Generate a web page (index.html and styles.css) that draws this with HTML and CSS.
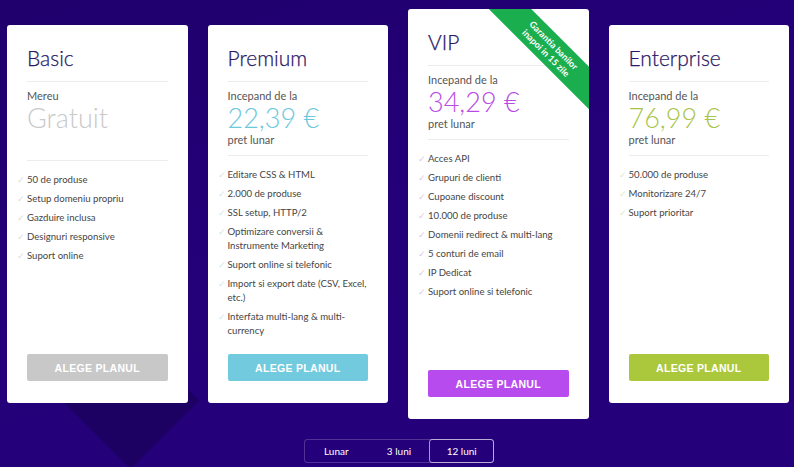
FILE: index.html
```html
<!DOCTYPE html>
<html lang="ro">
<head>
<meta charset="utf-8">
<title>Planuri</title>
<link rel="stylesheet" href="styles.css">
</head>
<body>
<div class="page">
  <div class="bg-diamond"></div>
  <div class="plans">
    <div class="card basic">
      <h2 class="title">Basic</h2>
      <div class="price-block">
        <div class="label">Mereu</div>
        <div class="price">Gratuit</div>
      </div>
      <ul class="features">
        <li>50 de produse</li>
        <li>Setup domeniu propriu</li>
        <li>Gazduire inclusa</li>
        <li>Designuri responsive</li>
        <li>Suport online</li>
      </ul>
      <button class="btn">ALEGE PLANUL</button>
    </div>
    <div class="card premium">
      <h2 class="title">Premium</h2>
      <div class="price-block">
        <div class="label">Incepand de la</div>
        <div class="price">22,39 €</div>
        <div class="label">pret lunar</div>
      </div>
      <ul class="features">
        <li>Editare CSS &amp; HTML</li>
        <li>2.000 de produse</li>
        <li>SSL setup, HTTP/2</li>
        <li>Optimizare conversii &amp; Instrumente Marketing</li>
        <li>Suport online si telefonic</li>
        <li>Import si export date (CSV, Excel, etc.)</li>
        <li>Interfata multi-lang &amp; multi-currency</li>
      </ul>
      <button class="btn">ALEGE PLANUL</button>
    </div>
    <div class="card vip">
      <div class="ribbon">Garantia banilor<br>inapoi in 15 zile</div>
      <h2 class="title">VIP</h2>
      <div class="price-block">
        <div class="label">Incepand de la</div>
        <div class="price">34,29 €</div>
        <div class="label">pret lunar</div>
      </div>
      <ul class="features">
        <li>Acces API</li>
        <li>Grupuri de clienti</li>
        <li>Cupoane discount</li>
        <li>10.000 de produse</li>
        <li>Domenii redirect &amp; multi-lang</li>
        <li>5 conturi de email</li>
        <li>IP Dedicat</li>
        <li>Suport online si telefonic</li>
      </ul>
      <button class="btn">ALEGE PLANUL</button>
    </div>
    <div class="card enterprise">
      <h2 class="title">Enterprise</h2>
      <div class="price-block">
        <div class="label">Incepand de la</div>
        <div class="price">76,99 €</div>
        <div class="label">pret lunar</div>
      </div>
      <ul class="features">
        <li>50.000 de produse</li>
        <li>Monitorizare 24/7</li>
        <li>Suport prioritar</li>
      </ul>
      <button class="btn">ALEGE PLANUL</button>
    </div>
  </div>
  <div class="toggle">
    <span class="seg">Lunar</span>
    <span class="seg">3 luni</span>
    <span class="seg active">12 luni</span>
  </div>
</div>
</body>
</html>
```

FILE: styles.css
```css
* { box-sizing: border-box; }
html, body {
  margin: 0;
  padding: 0;
  background: #230077;
  font-family: "Lato", "Open Sans", sans-serif;
}
.page {
  position: relative;
  width: 794px;
  height: 467px;
  overflow: hidden;
  padding-top: 9px;
  display: flex;
  flex-direction: column;
  align-items: center;
  background: linear-gradient(160deg, #1f006c 0%, #240079 45%, #25007b 100%);
}
.bg-diamond {
  position: absolute;
  left: 82px;
  top: 352px;
  width: 97px;
  height: 97px;
  background: #1c0062;
  transform: rotate(45deg);
}
.plans {
  position: relative;
  display: flex;
  align-items: center;
  gap: 20px;
  padding-left: 7px;
  width: 100%;
}
.card {
  position: relative;
  width: 180.5px;
  background: #fff;
  border-radius: 3px;
  padding: 20px 20px 22px;
  display: flex;
  flex-direction: column;
  overflow: hidden;
  height: 378px;
}
.card.vip { height: 410px; }
.title {
  margin: 0;
  font-size: 21px;
  line-height: 26px;
  font-weight: 300;
  color: #2a1864;
  padding-bottom: 10px;
  border-bottom: 1px solid #ececf0;
  -webkit-text-stroke: 0.25px #2a1864;
}
.price-block {
  padding: 7px 0 8px;
  border-bottom: 1px solid #ececf0;
}
.basic .price-block { padding-bottom: 27px; }
.label {
  font-size: 11px;
  line-height: 14px;
  color: #555;
}
.price {
  font-size: 27px;
  line-height: 30px;
  font-weight: 300;
}
.basic .price { color: #c9c9c9; }
.premium .price { color: #6ec8dc; }
.vip .price { color: #b84be6; }
.enterprise .price { color: #a9c44a; }
.features {
  list-style: none;
  margin: 0;
  padding: 12px 0 0;
}
.features li {
  display: flex;
  font-size: 9.6px;
  line-height: 14px;
  color: #454545;
  margin-bottom: 5px;
}
.features li::before {
  content: "\2713";
  flex: none;
  width: 10px;
  margin-left: -10px;
  font-size: 8.5px;
  color: #dcdcdc;
}
.premium .features li::before { color: #d3e6ec; }
.vip .features li::before { color: #dac8e8; }
.enterprise .features li::before { color: #dfe7c8; }
.btn {
  margin-top: auto;
  height: 27px;
  width: 100%;
  border: 0;
  border-radius: 2px;
  color: #fff;
  font-family: "Liberation Sans", Arial, sans-serif;
  font-weight: 700;
  font-size: 10.5px;
  letter-spacing: 0.3px;
}
.basic .btn { background: #c8c8c8; }
.premium .btn { background: #71cadd; }
.vip .btn { background: #b84bee; }
.enterprise .btn { background: #abc83d; }
.ribbon {
  position: absolute;
  left: 42px;
  top: 25px;
  width: 200px;
  height: 30px;
  background: #1aae4e;
  color: #fff;
  transform: rotate(45deg);
  text-align: center;
  font-size: 9px;
  line-height: 11px;
  font-weight: 700;
  padding-top: 4px;
}
.toggle {
  position: relative;
  margin-top: 20px;
  margin-left: 4px;
  display: flex;
  width: 190px;
  height: 24px;
  border: 1px solid rgba(255,255,255,0.2);
  border-radius: 3px;
}
.seg {
  flex: 1;
  display: flex;
  align-items: center;
  justify-content: center;
  color: #fff;
  font-size: 10px;
}
.seg.active {
  border: 1px solid rgba(255,255,255,0.6);
  border-radius: 3px;
  margin: -1px;
}
```
